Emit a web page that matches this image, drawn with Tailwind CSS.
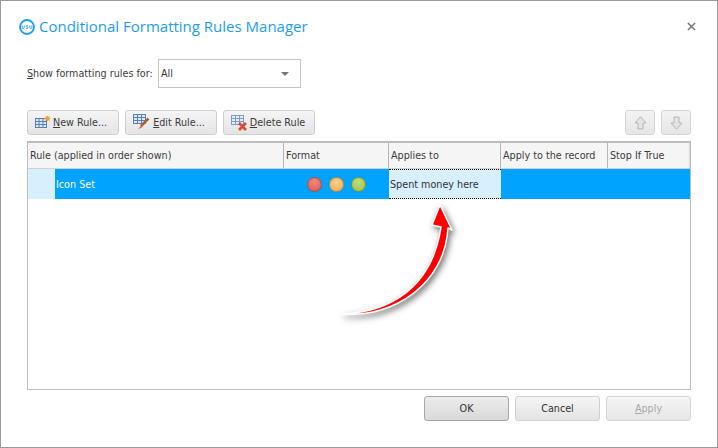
<!DOCTYPE html>
<html lang="en">
<head>
    <meta charset="UTF-8">
    <title>Conditional Formatting Rules Manager</title>
    <script src="https://cdn.jsdelivr.net/npm/@tailwindcss/browser@4"></script>
</head>
<body class="bg-white">
    <div class="relative w-[718px] h-[448px] overflow-hidden bg-white border border-[#9a9a9a] font-['DejaVu_Sans_Condensed','DejaVu_Sans',sans-serif] font-stretch-condensed text-[10.700px] text-[#3c3c3c] flex flex-col pl-[26px] pr-[26px]">
        <!-- title -->
        <div class="flex items-center h-[17px] mt-[17px] -ml-[8px]">
            <svg class="w-[16px] h-[16px] mr-[4px]" viewBox="0 0 16 16" fill="none">
                <circle cx="8" cy="8" r="7" stroke="#1c9cf0" stroke-width="1.800"/>
                <path d="M3.200 6.500v2.200c0 1.200 2 1.200 2 0V6.500M9 6.600c-.8-.5-2-.3-2 .5 0 1 2 .7 2 1.700 0 .8-1.300 .9-2 .4M10.800 6.500v2.200c0 1.200 2 1.200 2 0V6.500" stroke="#1c9cf0" stroke-width=".9"/>
            </svg>
            <span class="font-['Open_Sans',sans-serif] font-stretch-normal text-[15px] text-[#1c9cf0] whitespace-nowrap">Conditional Formatting Rules Manager</span>
            <span class="ml-auto mr-[-5px]">
                <svg class="w-[9px] h-[9px]" viewBox="0 0 10 10" fill="none"><path d="M1 1l8 8M9 1l-8 8" stroke="#707070" stroke-width="1.500"/></svg>
            </span>
        </div>

        <!-- filter -->
        <div class="flex items-center mt-[24px] h-[29px]">
            <span class="w-[131px] pt-[2px] whitespace-nowrap"><span class="underline">S</span>how formatting rules for:</span>
            <div class="flex items-center w-[143px] h-[29px] border border-[#c4c4c4] pl-[2px] pr-[11px]">
                <span class="pt-[2px] text-[#333]">All</span>
                <span class="ml-auto w-0 h-0 border-l-[4px] border-r-[4px] border-t-[4px] border-l-transparent border-r-transparent border-t-[#777]"></span>
            </div>
        </div>

        <!-- toolbar -->
        <div class="flex items-center gap-[6px] mt-[22px] h-[25px]">
            <button class="flex items-center justify-center w-[92px] h-[25px] pr-[4px] rounded-[3px] border border-[#cfcfcf] bg-gradient-to-b from-[#f5f5f5] to-[#e4e4e4]">
                <svg class="w-[16px] h-[14px] mr-[2px] mt-[-2px]" viewBox="0 0 16 14" fill="none">
                    <rect x=".5" y="3.500" width="11" height="9" fill="#dfe9f7" stroke="#5a7fb5"/>
                    <path d="M.5 6.500h11M.5 9.500h11M4 3.500v9M8 3.500v9" stroke="#5a7fb5"/>
                    <path d="M12.500 .2l.7 1.600 1.700-.7-.7 1.700 1.600.7-1.600.7.7 1.700-1.700-.7-.7 1.600-.7-1.600-1.700.7.7-1.700-1.600-.7 1.600-.7-.7-1.700 1.700.7z" fill="#f0a030"/>
                </svg>
                <span class="pt-[2px]"><span class="underline">N</span>ew Rule...</span>
            </button>
            <button class="flex items-center justify-center w-[92px] h-[25px] pr-[4px] rounded-[3px] border border-[#cfcfcf] bg-gradient-to-b from-[#f5f5f5] to-[#e4e4e4]">
                <svg class="w-[18px] h-[17px] mr-[2px]" viewBox="0 0 18 17" fill="none">
                    <rect x=".5" y=".5" width="12" height="9" fill="#dfe9f7" stroke="#5a7fb5"/>
                    <path d="M.5 3.500h12M.5 6.500h12M4.500 .5v9M8.500 .5v9" stroke="#5a7fb5"/>
                    <path d="M15.500 4.500L8 12" stroke="#a8662c" stroke-width="2.500"/>
                    <path d="M8.500 11l-3.500 4.500 4.800-2.800z" fill="#e2574c"/>
                </svg>
                <span class="pt-[2px]"><span class="underline">E</span>dit Rule...</span>
            </button>
            <button class="flex items-center justify-center w-[92px] h-[25px] pr-[2px] rounded-[3px] border border-[#cfcfcf] bg-gradient-to-b from-[#f5f5f5] to-[#e4e4e4]">
                <svg class="w-[17px] h-[16px] mr-[2px]" viewBox="0 0 17 16" fill="none">
                    <rect x=".5" y=".5" width="12" height="9" fill="#e8eef8" stroke="#7f9cc6"/>
                    <path d="M.5 3.500h12M.5 6.500h12M4.500 .5v9M8.500 .5v9" stroke="#7f9cc6"/>
                    <path d="M8 8l7 7M15 8l-7 7" stroke="#d9483b" stroke-width="2.600"/>
                </svg>
                <span class="pt-[2px]"><span class="underline">D</span>elete Rule</span>
            </button>
            <button class="flex items-center justify-center w-[30px] h-[25px] ml-auto rounded-[3px] border border-[#d4d4d4] bg-gradient-to-b from-[#f3f3f3] to-[#e6e6e6]">
                <svg class="w-[13px] h-[14px]" viewBox="0 0 13 14" fill="#e4e4e4"><path d="M6.500 .8L12 7H9v6H4V7H1z" stroke="#b4b4b4"/></svg>
            </button>
            <button class="flex items-center justify-center w-[30px] h-[25px] rounded-[3px] border border-[#d4d4d4] bg-gradient-to-b from-[#f3f3f3] to-[#e6e6e6]">
                <svg class="w-[13px] h-[14px]" viewBox="0 0 13 14" fill="#e4e4e4"><path d="M6.500 13.200L12 7H9V1H4v6H1z" stroke="#b4b4b4"/></svg>
            </button>
        </div>

        <!-- rules table -->
        <div class="mt-[6px] h-[249px] border border-[#bdbdbd] border-t-2">
            <div class="grid grid-cols-[256px_105px_112px_107px_82px] h-[26px] bg-[#f5f5f5] border-b border-[#d0d0d0]">
                <div class="flex items-center pl-[2px] pt-[2px] border-r border-[#b4b4b4]">Rule (applied in order shown)</div>
                <div class="flex items-center pl-[2px] pt-[2px] border-r border-[#b4b4b4]">Format</div>
                <div class="flex items-center pl-[2px] pt-[2px] border-r border-[#b4b4b4]">Applies to</div>
                <div class="flex items-center pl-[2px] pt-[2px] border-r border-[#b4b4b4]">Apply to the record</div>
                <div class="flex items-center pl-[2px] pt-[2px] border-r border-[#d8d8d8]">Stop If True</div>
            </div>
            <div class="grid grid-cols-[27px_229px_105px_112px_189px] h-[30px] bg-[#00a4ff]">
                <div class="bg-[#d8effe]"></div>
                <div class="flex items-center pl-[1px] pt-[2px] text-white">Icon Set</div>
                <div class="flex items-center justify-center gap-[7px]">
                    <span class="w-[15px] h-[15px] rounded-full border border-[#b8483e] bg-[radial-gradient(circle_at_50%_30%,#f08a7e,#d9574d)]"></span>
                    <span class="w-[15px] h-[15px] rounded-full border border-[#c98a38] bg-[radial-gradient(circle_at_50%_30%,#f9d08c,#eeaa56)]"></span>
                    <span class="w-[15px] h-[15px] rounded-full border border-[#78963a] bg-[radial-gradient(circle_at_50%_30%,#c6dc78,#9cbe4a)]"></span>
                </div>
                <div class="flex items-center pl-[1px] pt-[2px] bg-[#d8effe] border-y border-dotted border-black text-[#333]">Spent money here</div>
                <div></div>
            </div>
        </div>

        <!-- dialog buttons -->
        <div class="flex justify-end gap-[6px] mt-[6px]">
            <button class="w-[85px] h-[25px] pt-[2px] rounded-[3px] border border-[#a8a8a8] bg-gradient-to-b from-[#ececec] to-[#d9d9d9] text-[#333]">OK</button>
            <button class="w-[85px] h-[25px] pt-[2px] rounded-[3px] border border-[#cfcfcf] bg-gradient-to-b from-[#f5f5f5] to-[#e4e4e4] text-[#333]">Cancel</button>
            <button class="w-[85px] h-[25px] pt-[2px] rounded-[3px] border border-[#d4d4d4] bg-gradient-to-b from-[#f5f5f5] to-[#e6e6e6] text-[#a8a8a8]"><span class="underline">A</span>pply</button>
        </div>

        <!-- red annotation arrow -->
        <svg class="absolute left-[-1px] top-[-1px] w-[718px] h-[448px] pointer-events-none drop-shadow-[2px_3px_3px_rgba(0,0,0,0.55)]" viewBox="0 0 718 448" fill="none">
            <path d="M342 314C390 312 432 288 441 227L432 225L440 205L452 230L448 228C445 283 395 318 342 314Z" fill="#ff0000" stroke="#ffffff" stroke-width="1.500" stroke-linejoin="round"/>
        </svg>
    </div>
</body>
</html>
